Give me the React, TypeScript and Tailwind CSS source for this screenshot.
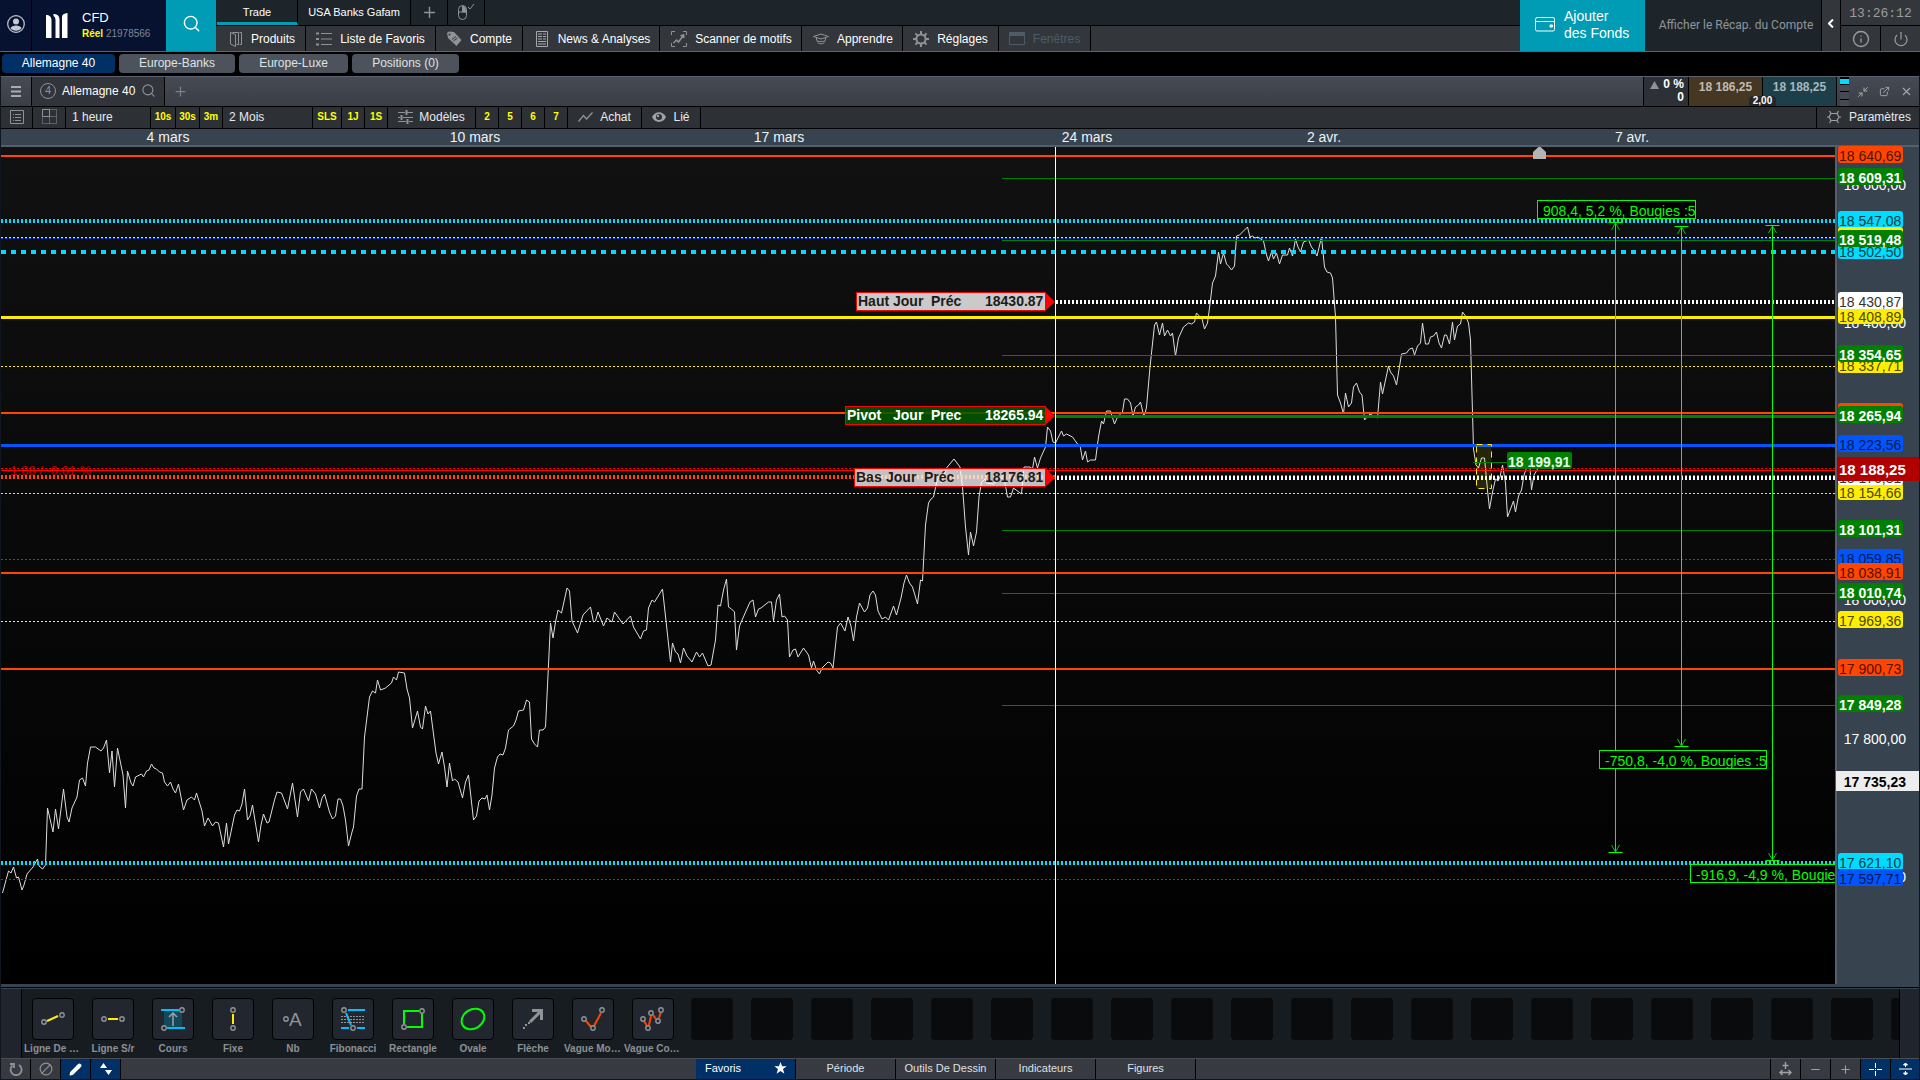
import React, { useState } from "react";
import { Search, Plus, Info, Power, X, ExternalLink, Minimize2, Ban, Pencil, Minus } from "lucide-react";

const GREEN = "#008000";
const ORANGE = "#ff4500";
const CYAN = "#00dcff";
const YELLOW = "#ffee00";
const BLUE = "#0055ff";

// horizontal levels: y, color, thickness, dash, start x
const levels = [
  { y: 156, color: ORANGE, w: 2 },
  { y: 178.5, color: GREEN, w: 1, x: 1002 },
  { y: 221, color: CYAN, w: 4, dash: "2 2" },
  { y: 238.5, color: BLUE, w: 1, dash: "2 2" },
  { y: 237.5, color: YELLOW, w: 1, dash: "2 2" },
  { y: 240.5, color: GREEN, w: 1, x: 1002 },
  { y: 252, color: CYAN, w: 4, dash: "5 5" },
  { y: 302, color: "#ffffff", w: 4, dash: "2 2", x: 1056 },
  { y: 317.5, color: YELLOW, w: 3 },
  { y: 355.5, color: GREEN, w: 1, x: 1002 },
  { y: 366.5, color: YELLOW, w: 1, dash: "2 2" },
  { y: 413, color: ORANGE, w: 2 },
  { y: 416.5, color: GREEN, w: 3, x: 1056 },
  { y: 445.5, color: BLUE, w: 3 },
  { y: 468.5, color: "#ff0000", w: 1, dash: "2 2" },
  { y: 470.5, color: "#ff0000", w: 1 },
  { y: 477, color: ORANGE, w: 4, dash: "2 2" },
  { y: 478, color: "#ffffff", w: 4, dash: "2 2", x: 1057 },
  { y: 493.5, color: YELLOW, w: 1, dash: "2 2" },
  { y: 530.5, color: GREEN, w: 1, x: 1002 },
  { y: 559.5, color: BLUE, w: 1, dash: "2 2" },
  { y: 573, color: ORANGE, w: 2 },
  { y: 593.5, color: GREEN, w: 1, x: 1002 },
  { y: 621.5, color: "#ffee60", w: 1, dash: "2 2" },
  { y: 669, color: ORANGE, w: 2 },
  { y: 705.5, color: GREEN, w: 1, x: 1002 },
  { y: 863, color: CYAN, w: 4, dash: "2 2" },
  { y: 879.5, color: BLUE, w: 1, dash: "2 2" },
];

const price =
  "2.5,893 8.5,871 11,873 13.5,867 16.5,878 18.5,877 22,890 24,885 27,874 33,867 37.5,859 39,866 42.5,869 45.5,865 47.5,808 53,832 55.5,809 58.5,829 63.5,789 67,817 69,822 72,808 77,797 79.5,780 82.5,778 85.5,786 87.5,763 90.5,747 95.5,747 101,751 103.5,748 106.5,740 109.5,773 112,751 114.5,787 117.5,748 123,775 125.5,808 127.5,771 131,783 133,786 135.5,777 141.5,774 143.5,777 146.5,771 149,770 151.5,764 154,768 156.5,769 159.5,772 162.5,773 164.5,782 167.5,786 170.5,782 173,789 175.5,793 178.5,784 183.5,810 187,800 191.5,797 194.5,800 196.5,793 202,811 204.5,826 208,818 212.5,826 215.5,822 218.5,823 223.5,847 226.5,823 228.5,844 234.5,815 237,810 239.5,811 242,804 244.5,789 247.5,820 250,816 252.5,805 258.5,842 261,825 263.5,814 267,823 269,822 274.5,800 277,792 281.5,793 287.5,809 292.5,783 297.5,817 300.5,792 303.5,789 308.5,801 311.5,789 315.5,794 319.5,808 322,798 324.5,794 329.5,812 332.5,819 335.5,816 338,799 340.5,799 343,806 345.5,820 348.5,846 352,832 353.5,827 356.5,796 359,789 362,789 364.5,737 369.5,697 372.5,691 375.5,693 377.5,680 380.5,690 385.5,688 391.5,683 393.5,677 396.5,680 398.5,672 404.5,673 407,689 409.5,698 412.5,728 417.5,711 420.5,727 422.5,729 425.5,706 428,714 430.5,711 436,753 438.5,764 442,752 444.5,767 447,787 449.5,763 452.5,781 454.5,779 458,782 462.5,798 465.5,782 468.5,775 473.5,820 476.5,816 479,801 482,798 485,799 487,795 489.5,810 492,795 494.5,768 497.5,757 500,754 503,755 505.5,748 508.5,730 513.5,726 516,720 518.5,711 523.5,710 526.5,700 529.5,702 531.5,739 534.5,744 537.5,747 539.5,730 543,730 545.5,727 550.5,623 553,638 555.5,622 558,610 561.5,613 567,588 569.5,591 572,621 577.5,633 583,615 590.5,607 593.5,622 595.5,621 598,612 603.5,626 607,618 612,622 614.5,612 623,624 630.5,616 633.5,627 640.5,639 643.5,631 646.5,630 648.5,608 652,600 654.5,602 662.5,589 670.5,662 672.5,643 675.5,652 678,654 680.5,663 683.5,648 687,656 692,662 696.5,652 699.5,657 702.5,653 708,666 711,665 715.5,640 718,605 720.5,606 723.5,590 726.5,579 728.5,607 731.5,609 734.5,612 736.5,650 739.5,626 742.5,619 750,602 753,600 755.5,617 758.5,609 761,608 768.5,602 771.5,602 773.5,621 776.5,600 779.5,594 782,617 784.5,616 787.5,620 789.5,657 793,650 795.5,649 798,657 803.5,648 808.5,655 811.5,668 813.5,661 816.5,670 819.5,674 822,668 828,662 830.5,663 833,668 837.5,627 840.5,623 845,631 848,617 851,626 853.5,641 856.5,617 859.5,603 864.5,612 867.5,608 870,595 873,591 875.5,595 878,611 882,619 885.5,617 888.5,620 893.5,606 896.5,615 901,598 904,583 906.5,575 909.5,583 912.5,587 917.5,604 920.5,580 922.5,581 925.5,525 928.5,503 931,499 933.5,497 936.5,483 939,475 941.5,483 946.5,468 954,459 960,467 962.5,487 965.5,527 968.5,555 970.5,532 973.5,546 976.5,532 979,497 981.5,482 985,479 986.5,483 993.5,484 1003.5,475 1007.5,497 1010.5,497 1013.5,488 1021.5,494 1024,467 1030,467 1032.5,469 1034.5,457 1037.5,468 1040.5,458 1045.5,447 1047.5,427 1050.5,431 1053,442 1055.5,443 1058.5,437 1061.5,431 1063.5,436 1066.5,434 1072.5,437 1077.5,444 1080,445 1082.5,460 1085.5,451 1087.5,462 1090.5,460 1095.5,460 1098.5,437 1101.5,421 1103.5,424 1106.5,411 1110.5,411 1114.5,424 1117.5,417 1122.5,412 1124.5,399 1127.5,399 1130.5,403 1133,416 1135.5,407 1138.5,405 1140.5,402 1143.5,415 1145,414 1146.5,407 1150,367 1154.5,325 1156.5,322 1159.5,335 1162.5,323 1164.5,336 1167.5,330 1170.5,336 1172.5,333 1175.5,356 1178.5,338 1183.5,327 1188.5,323 1191.5,324 1194.5,322 1196.5,313 1202,319 1204.5,329 1207.5,323 1210.5,300 1212.5,283 1215.5,276 1218.5,252 1220.5,264 1223.5,253 1226.5,264 1228.5,266 1231.5,270 1234.5,266 1236.5,236 1239.5,235 1247.5,227 1250,237 1252.5,236 1255,238 1258,237 1263.5,241 1266.5,255 1268.5,261 1271.5,252 1273.5,259 1276.5,253 1279.5,264 1282.5,255 1287.5,255 1289.5,248 1292.5,256 1295.5,239 1298,247 1300.5,252 1303.5,242 1308.5,240 1311.5,247 1314.5,251 1317,256 1321.5,237 1324.5,267 1327,272 1330.5,273 1332.5,278 1335.5,317 1337.5,395 1340.5,403 1343.5,414 1345.5,393 1348.5,407 1351.5,403 1353.5,387 1356.5,383 1359.5,392 1362,395 1364.5,420 1370,414 1377.5,418 1380.5,382 1382.5,394 1388.5,366 1390.5,372 1393.5,376 1396.5,385 1401.5,354 1406.5,353 1409.5,349 1412.5,348 1414.5,355 1417.5,346 1420.5,343 1422.5,323 1425.5,344 1428.5,344 1430.5,337 1433.5,336 1436.5,332 1439,343 1441.5,348 1444.5,335 1446.5,335 1449.5,344 1452.5,322 1454.5,340 1457.5,326 1460.5,324 1462.5,312 1465.5,316 1468.5,323 1470.5,340 1472.5,413 1473.5,449 1476,465 1478.5,468 1481.5,458 1484.5,458 1487.5,490 1489.5,509 1492.5,492 1495.5,479 1498,481 1500,477 1502.5,465 1505.5,483 1507.5,517 1513.5,501 1515.5,512 1518.5,496 1521.5,490 1524,475 1526.5,468 1530,468 1531.5,490 1534,475 1537.5,469";

const measures = [
  { x: 1615.5, top: 222, bottom: 852 },
  { x: 1681.5, top: 226, bottom: 746 },
  { x: 1772.5, top: 225, bottom: 860 },
];

const measureBoxes = [
  { x: 1537, y: 200, w: 158, text: "908,4, 5,2 %, Bougies :5" },
  { x: 1599, y: 750, w: 167, text: "-750,8, -4,0 %, Bougies :5" },
  { x: 1690, y: 864, w: 167, text: "-916,9, -4,9 %, Bougies :5" },
];

const dayLabels = [
  { y: 292, x: 856, words: [["Haut", 858], ["Jour", 893], ["Préc", 931], ["18430.87", 985]], fill: "#ffffff", opacity: 0.78, ink: "#1c1c1c" },
  { y: 406, x: 845, words: [["Pivot", 847], ["Jour", 893], ["Prec", 931], ["18265.94", 985]], fill: "#005a00", opacity: 0.85, ink: "#ffffff" },
  { y: 468, x: 854, words: [["Bas", 856], ["Jour", 886], ["Préc", 924], ["18176.81", 985]], fill: "#ffffff", opacity: 0.75, ink: "#1c1c1c" },
];

// price scale, painted in this order
const ticks = [
  { top: 177, text: "18 600,00" },
  { top: 315, text: "18 400,00" },
  { top: 592, text: "18 000,00" },
  { top: 731, text: "17 800,00" },
  { top: 869, text: "17 600,00" },
];

const tags = [
  { top: 146, text: "18 640,69", cls: "bg-[#ff4500] text-[#4d1500]" },
  { top: 168, text: "18 609,31", cls: "bg-[#008000] text-white font-bold" },
  { top: 211, text: "18 547,08", cls: "bg-[#00dcff] text-[#003a45]" },
  { top: 227, text: "", cls: "bg-[#ffee00]" },
  { top: 242, text: "18 502,50", cls: "bg-[#00dcff] text-[#004450]" },
  { top: 230, text: "18 519,48", cls: "bg-[#008000] text-white font-bold" },
  { top: 307, text: "18 408,89", cls: "bg-[#ffee00] text-[#4d4700]" },
  { top: 292, text: "18 430,87", cls: "bg-white text-[#333333]" },
  { top: 356, text: "18 337,71", cls: "bg-[#ffee00] text-[#4d4700]" },
  { top: 345, text: "18 354,65", cls: "bg-[#008000] text-white font-bold" },
  { top: 403, text: "", cls: "bg-[#ff4500]" },
  { top: 406, text: "18 265,94", cls: "bg-[#008000] text-white font-bold" },
  { top: 435, text: "18 223,56", cls: "bg-[#0055ff] text-[#001a4d]" },
  { top: 483, text: "18 154,66", cls: "bg-[#ffee00] text-[#4d4700]" },
  { top: 468, text: "18 176,81", cls: "bg-white text-[#333333]" },
  { top: 520, text: "18 101,31", cls: "bg-[#008000] text-white font-bold" },
  { top: 549, text: "18 059,85", cls: "bg-[#0055ff] text-[#001a4d]" },
  { top: 563, text: "18 038,91", cls: "bg-[#ff4500] text-[#4d1500]" },
  { top: 583, text: "18 010,74", cls: "bg-[#008000] text-white font-bold" },
  { top: 611, text: "17 969,36", cls: "bg-[#ffee00] text-[#4d4700]" },
  { top: 659, text: "17 900,73", cls: "bg-[#ff4500] text-[#4d1500]" },
  { top: 695, text: "17 849,28", cls: "bg-[#008000] text-white font-bold" },
  { top: 853, text: "17 621,10", cls: "bg-[#00dcff] text-[#003a45]" },
  { top: 869, text: "17 597,71", cls: "bg-[#0055ff] text-[#001a4d]" },
];

const dates = [
  { x: 167, text: "4 mars" },
  { x: 474, text: "10 mars" },
  { x: 778, text: "17 mars" },
  { x: 1086, text: "24 mars" },
  { x: 1323, text: "2 avr." },
  { x: 1631, text: "7 avr." },
];

function BookIcon() {
  return (
    <svg width="14" height="16" viewBox="0 0 14 16" fill="none" stroke="#8f9296">
      <path d="M1.5 1.5l5 2v12l-5-2.5z" />
      <path d="M3.5 1.5h6v12h-2M10.5 1.5h2v12h-2" />
    </svg>
  );
}

function ListIcon() {
  return (
    <svg width="16" height="14" viewBox="0 0 16 14" stroke="#8f9296">
      <path d="M0 1.5h3M0 7h3M0 12.5h3" strokeWidth="2" />
      <path d="M5 1.5h11M5 7h11M5 12.5h11" />
    </svg>
  );
}

function TagIcon() {
  return (
    <svg width="16" height="16" viewBox="0 0 16 16">
      <path d="M1 2l2-1.500 5 .5 7.500 8-5 6L2 7z" fill="#8f9296" />
      <circle cx="3.500" cy="3.500" r="1" fill="#34373c" />
      <path d="M6 8.500l4-3M7.500 10l4-3" stroke="#34373c" />
    </svg>
  );
}

function NewsIcon() {
  return (
    <svg width="12" height="16" viewBox="0 0 12 16" fill="none" stroke="#a5a7aa">
      <path d="M.5.5h11v15H.5z" />
      <path d="M2 3h4M7 3h3M2 5.500h4M7 5.500h3M2 8h4M7 8h3M2 10.500h8M2 13h8" />
    </svg>
  );
}

function ScannerIcon() {
  return (
    <svg width="16" height="16" viewBox="0 0 16 16" fill="none" stroke="#8f9296">
      <path d="M.5 4V.5H4M12 .5h3.500V4M15.500 12v3.500H12M4 15.500H.500V12" />
      <path d="M2.500 12l3-3 2 2 4.500-6" strokeWidth="1.500" />
      <path d="M9.500 4.500l3.500-1v3.500z" fill="#8f9296" />
    </svg>
  );
}

function HatIcon() {
  return (
    <svg width="16" height="12" viewBox="0 0 16 12" fill="none" stroke="#8f9296">
      <path d="M.5 3.500L8 1l7.500 2.500L8 6z" />
      <path d="M3.500 5v2c0 2 9 2 9 0V5M4.500 8.500c0 3 7 3 7 0" />
    </svg>
  );
}

function GearIcon() {
  return (
    <svg width="16" height="16" viewBox="0 0 16 16" fill="none" stroke="#8f9296" strokeWidth="2">
      <circle cx="8" cy="8" r="4.600" />
      <path d="M8 0v3M8 13v3M0 8h3M13 8h3M2.400 2.400l2 2M11.600 11.600l2 2M13.600 2.400l-2 2M4.400 11.600l-2 2" />
    </svg>
  );
}

function WindowIcon() {
  return (
    <svg width="16" height="13" viewBox="0 0 16 13" fill="none" stroke="#4c5d69">
      <path d="M.5.5h15v12H.5z" />
      <path d="M1 2.500h14" strokeWidth="3" />
    </svg>
  );
}

function WalletIcon() {
  return (
    <svg width="20" height="15" viewBox="0 0 20 15" fill="none" stroke="#ffffff">
      <path d="M.5 2.500v10a1.500 1.500 0 0 0 1.500 1.500h16a1.500 1.500 0 0 0 1.500-1.500V4.500H.5M.5 2.500a2 2 0 0 1 2-2H18a1.500 1.500 0 0 1 1.500 1.500v3" />
      <path d="M15 8h2.500v2H15z" fill="#ffffff" />
    </svg>
  );
}

function MouseIcon() {
  return (
    <svg width="18" height="17" viewBox="0 0 18 17" fill="none" stroke="#8f9296">
      <path d="M1.500 5.500a4 4 0 0 1 8 0v6a4 4 0 0 1-8 0zM5.500 2v6M1.500 8h8" />
      <path d="M6 2.500c2 0 3 2 3 5.500H6z" fill="#8f9296" />
      <path d="M11 3l2 2 4-5" />
    </svg>
  );
}

function SlidersIcon() {
  return (
    <svg width="15" height="14" viewBox="0 0 15 14" fill="none" stroke="#8f9296">
      <path d="M0 2.500h7M9 2.500h6M0 7.500h2M5 7.500h10M0 11.500h8M11 11.500h4" />
      <path d="M8.500 0v5M3.500 5v5M9.500 9v5" strokeWidth="2" />
    </svg>
  );
}

const navItems = [
  { label: "Produits", icon: <BookIcon />, cls: "w-[89px] gap-2 pl-0.5" },
  { label: "Liste de Favoris", icon: <ListIcon />, cls: "w-[130px] gap-2" },
  { label: "Compte", icon: <TagIcon />, cls: "w-[87px] gap-2" },
  { label: "News & Analyses", icon: <NewsIcon />, cls: "w-[137px] gap-2.5 pl-1" },
  { label: "Scanner de motifs", icon: <ScannerIcon />, cls: "w-[142px] gap-2 pl-0.5" },
  { label: "Apprendre", icon: <HatIcon />, cls: "w-[101px] gap-2 pl-0.5" },
  { label: "Réglages", icon: <GearIcon />, cls: "w-[96px] gap-2" },
  { label: "Fenêtres", icon: <WindowIcon />, cls: "w-[92px] gap-2 text-[#4c5d69]" },
];

function Header() {
  return (
    <header className="flex h-[52px] shrink-0 border-b border-[#1f7f8d] bg-[#1d252b]">
      <button aria-label="Profil" className="flex w-8 items-center justify-center border-r border-black bg-[#06122f] pb-1 text-[#c5cad2]">
        <svg width="18" height="18" viewBox="0 0 18 18">
          <circle cx="9" cy="9" r="8.300" fill="none" stroke="currentColor" strokeWidth="1.200" />
          <circle cx="9" cy="6.500" r="3" fill="currentColor" />
          <path d="M3.500 13c1-3.500 10-3.500 11 0-2 3.600-9 3.600-11 0z" fill="currentColor" />
        </svg>
      </button>
      <div className="flex w-[134px] items-center gap-3.5 bg-[#06122f] pl-3.5">
        <svg width="22" height="26" viewBox="0 0 22 26" fill="#ffffff">
          <path d="M0 2c3.500 0 5.500 2 5.500 5v18H0zM7.500 1c4 0 6 2 6 6v18h-4V9c0-3 0-5-2-6zM16 4c0-2.500 2-3.500 5.500-4v25H16z" />
        </svg>
        <div>
          <div className="text-[13px] leading-4 text-white">CFD</div>
          <div className="text-[10px] leading-4 text-[#7f8794]">
            <b className="text-[#ffff00]">Réel</b> 21978566
          </div>
        </div>
      </div>
      <button aria-label="Rechercher" className="flex w-[50px] items-center justify-center bg-[#009bb4] pb-1 text-white">
        <Search size={19} strokeWidth={1.8} />
      </button>
      <div className="flex min-w-0 flex-1 flex-col">
        <div className="flex h-[26px] border-b border-black pl-px text-[11px] text-white">
          <button className="w-[81px] border-r border-b-[3px] border-r-black border-b-[#009bb4] pt-0.5">Trade</button>
          <button className="w-[113px] border-r border-black">USA Banks Gafam</button>
          <button aria-label="Ajouter" className="flex w-[37px] items-center justify-center border-r border-black text-[#8f9296]">
            <Plus size={17} strokeWidth={2} />
          </button>
          <button aria-label="Souris" className="flex w-[37px] items-center justify-center border-r border-black">
            <MouseIcon />
          </button>
        </div>
        <nav className="flex flex-1 bg-[#33363b] pl-px text-xs text-white">
          {navItems.map((n) => (
            <button key={n.label} className={`flex shrink-0 items-center justify-center border-r border-black ${n.cls}`}>
              {n.icon}
              {n.label}
            </button>
          ))}
        </nav>
      </div>
      <button className="flex w-[125px] items-center gap-[9px] bg-[#009bb4] pb-0.5 pl-[15px] text-left text-sm leading-[17px] text-white">
        <WalletIcon />
        <span>
          Ajouter
          <br />
          des Fonds
        </span>
      </button>
      <button className="w-[177px] border-r border-black pb-0.5 pl-1.5 font-[Roboto,sans-serif] text-xs text-[#8f969a]">
        Afficher le Récap. du Compte
      </button>
      <button aria-label="Replier" className="flex w-[19px] items-center justify-center border-r border-black bg-[#33363b] pb-1">
        <svg width="6" height="9" viewBox="0 0 6 9" fill="none" stroke="#ffffff" strokeWidth="2">
          <path d="M5 .5l-4 4 4 4" />
        </svg>
      </button>
      <div className="flex w-[79px] flex-col bg-[#33363b] text-[#9a9da0]">
        <div className="h-[26px] border-b border-black text-center font-['Liberation_Mono',monospace] text-[13px] leading-7">13:26:12</div>
        <div className="flex flex-1">
          <button aria-label="Informations" className="flex w-10 items-center justify-center border-r border-black">
            <Info size={18} strokeWidth={1.8} />
          </button>
          <button aria-label="Quitter" className="flex flex-1 items-center justify-center">
            <Power size={16} strokeWidth={1.8} />
          </button>
        </div>
      </div>
    </header>
  );
}

function WorkspaceTabs() {
  const [active, setActive] = useState("Allemagne 40");
  const tabs = [
    { label: "Allemagne 40", cls: "w-[113px]" },
    { label: "Europe-Banks", cls: "w-[116px]" },
    { label: "Europe-Luxe", cls: "w-[109px]" },
    { label: "Positions (0)", cls: "w-[107px]" },
  ];
  return (
    <div className="flex h-6 shrink-0 items-center gap-1 bg-black pb-px pl-0.5 text-xs">
      {tabs.map((t) => (
        <button
          key={t.label}
          onClick={() => setActive(t.label)}
          className={`h-[19px] rounded-sm pb-0.5 ${t.cls} ${active === t.label ? "bg-[#003066] text-white" : "bg-[#4c535c] text-[#dfe3e6]"}`}
        >
          {t.label}
        </button>
      ))}
    </div>
  );
}

function WindowHeader() {
  return (
    <div className="flex h-[31px] shrink-0 border-t border-b border-t-[#5c626e] border-b-black bg-linear-to-b from-[#464a54] to-[#3a3e46]">
      <button aria-label="Menu" className="flex w-[31px] items-center justify-center border-r border-black text-[#a9abae]">
        <svg width="10" height="11" viewBox="0 0 10 11" stroke="currentColor" strokeWidth="2">
          <path d="M0 1h10M0 5.500h10M0 10h10" />
        </svg>
      </button>
      <div className="flex w-[133px] items-center gap-1.5 border-r border-black bg-[#31343a] pb-0.5 pl-2 text-xs text-white">
        <span className="flex size-4 items-center justify-center rounded-full border border-[#8f9296] text-[11px] text-[#8f9296]">4</span>
        Allemagne 40
        <Search size={15} strokeWidth={1.8} className="text-[#8f9296]" />
      </div>
      <button aria-label="Nouvel onglet" className="flex w-[30px] items-center justify-center text-[#7c7f86]">
        <Plus size={15} strokeWidth={2} />
      </button>
      <div className="flex-1" />
      <div className="w-[46px] border-r border-l border-black bg-[#2d3036] pt-px pr-1 text-right text-xs leading-[13px] font-bold text-white">
        <div className="flex items-center justify-end gap-1">
          <svg width="9" height="8" viewBox="0 0 9 8" fill="#8f9296">
            <path d="M4.500 0L9 8H0z" />
          </svg>
          0 %
        </div>
        <div>0</div>
      </div>
      <div className="relative flex text-xs font-bold text-[#bfbcb4]">
        <button className="w-[74px] border-r border-black bg-[#463722] pb-2.5">18 186,25</button>
        <button className="w-[74px] border-r border-black bg-[#1c3f49] pb-2.5 text-[#a9b8bc]">18 188,25</button>
        <span className="absolute bottom-0 left-[60px] h-[10px] w-[27px] rounded-t-sm bg-[#23262c] text-center text-[10px] leading-[10px] text-white">2,00</span>
      </div>
      <div className="flex w-[82px] items-center pl-[3px] text-[#a5a8ad]">
        <div className="flex w-[9px] flex-col gap-px self-stretch bg-black pt-0.5">
          <i className="h-[5px] bg-[#00dcff]" />
          <i className="flex-1 bg-[#464a54]" />
          <i className="flex-1 bg-[#464a54]" />
          <i className="flex-1 bg-[#464a54]" />
        </div>
        <div className="flex flex-1 items-center justify-between pr-1.5 pl-2">
          <button aria-label="Réduire">
            <Minimize2 size={12} strokeWidth={2} />
          </button>
          <button aria-label="Détacher">
            <ExternalLink size={11} strokeWidth={2} />
          </button>
          <button aria-label="Fermer">
            <X size={13} strokeWidth={2} />
          </button>
        </div>
      </div>
    </div>
  );
}

const cell = "flex items-center border-r border-black shrink-0 h-full pb-0.5";
const quick = "justify-center text-[10px] font-bold text-[#ffff00]";

function ChartToolbar() {
  return (
    <div className="flex h-[22px] shrink-0 border-b border-black bg-[#2d3135] text-xs text-[#e8eaec]">
      <button aria-label="Liste" className={`${cell} w-8 justify-center`}>
        <svg width="14" height="14" viewBox="0 0 14 14" fill="none" stroke="#8f9296">
          <path d="M.5.5h13v13H.5zM3 4.500h1M3 7.500h1M3 10.500h1M5 4.500h6M5 7.500h6M5 10.500h6" />
        </svg>
      </button>
      <button aria-label="Disposition" className={`${cell} w-[33px] justify-center`}>
        <svg width="15" height="15" viewBox="0 0 15 15" fill="none" stroke="#8f9296">
          <path d="M.5.5h7v7h-7z" />
          <path d="M7.500.5h7v14H.5v-7M7.500 7.500h7M7.500 7.500v7" strokeDasharray="1 1" />
        </svg>
      </button>
      <button className={`${cell} w-[85px] pl-1.5`}>1 heure</button>
      <button className={`${cell} w-[25px] ${quick}`}>10s</button>
      <button className={`${cell} w-6 ${quick}`}>30s</button>
      <button className={`${cell} w-[23px] ${quick}`}>3m</button>
      <button className={`${cell} w-[90px] pl-1.5`}>2 Mois</button>
      <button className={`${cell} w-[29px] ${quick}`}>SLS</button>
      <button className={`${cell} w-[23px] ${quick}`}>1J</button>
      <button className={`${cell} w-[23px] ${quick}`}>1S</button>
      <button className={`${cell} w-[88px] justify-center gap-1.5`}>
        <SlidersIcon />
        Modèles
      </button>
      <button className={`${cell} w-[23px] ${quick}`}>2</button>
      <button className={`${cell} w-[23px] ${quick}`}>5</button>
      <button className={`${cell} w-[23px] ${quick}`}>6</button>
      <button className={`${cell} w-[23px] ${quick}`}>7</button>
      <button className={`${cell} w-[74px] justify-center gap-[7px]`}>
        <svg width="15" height="10" viewBox="0 0 15 10" fill="none" stroke="#8f9296" strokeWidth="1.300">
          <path d="M.5 9.500l5-6 3 3.500 6-6.500" />
        </svg>
        Achat
      </button>
      <button className={`${cell} w-[59px] justify-center gap-[7px]`}>
        <svg width="14" height="10" viewBox="0 0 14 10">
          <path d="M0 5c3-6.500 11-6.500 14 0-3 6.500-11 6.500-14 0z" fill="#a0a2a5" />
          <circle cx="7" cy="5" r="3" fill="#2d3135" />
          <circle cx="6" cy="4" r="1.200" fill="#a0a2a5" />
        </svg>
        Lié
      </button>
      <div className="flex-1" />
      <button className="flex w-[103px] items-center justify-end gap-2 border-l border-black pr-2 pb-0.5">
        <svg width="14" height="14" viewBox="0 0 14 14" fill="none" stroke="#a0a2a5" strokeWidth="1.200">
          <path d="M4 3.500h6l2 3.500-2 3.500H4L2 7zM4 3.500L2.500 1M10 3.500L11.500 1M12 7h2M2 7H0M4 10.500L2.500 13M10 10.500l1.500 2.500" />
        </svg>
        Paramètres
      </button>
    </div>
  );
}

function Plot() {
  return (
    <svg className="block h-full w-full" fontFamily="'Liberation Sans', Arial, sans-serif" fontSize="14">
      <defs>
        <linearGradient id="plotBg" x1="0" y1="0" x2="0" y2="1">
          <stop offset="0" stopColor="#111111" />
          <stop offset="1" stopColor="#000000" />
        </linearGradient>
      </defs>
      <rect width="100%" height="100%" fill="url(#plotBg)" />
      <g transform="translate(-1 -147)">
        <text x="6" y="475" fontSize="13" fill="#c00000">-1.88 / -0.01 %</text>
        <polyline points={price} fill="none" stroke="#dddddd" strokeWidth="1" strokeLinejoin="round" />
        {levels.map((l) => (
          <line key={l.y} x1={l.x || 1} x2="101%" y1={l.y} y2={l.y} stroke={l.color} strokeWidth={l.w} strokeDasharray={l.dash} />
        ))}
        <rect x="1476.500" y="444.500" width="15" height="44" fill="#ffee00" fillOpacity="0.120" stroke="#ffee00" strokeDasharray="6 5" />
        <path d="M1473 462.500h34" stroke={GREEN} />
        <rect x="1507" y="452" width="65" height="17" rx="2" fill={GREEN} />
        <text x="1508" y="467" fontWeight="bold" fill="#e8ffe8">18 199,91</text>

        {dayLabels.map((d) => (
          <g key={d.y}>
            <rect x={d.x + 0.5} y={d.y + 0.5} width={1045 - d.x} height="18" fill={d.fill} fillOpacity={d.opacity} stroke="#ff0000" />
            <path d={`M1045 ${d.y}l10 10-10 9z`} fill="#ff0000" />
            {d.words.map((w) => (
              <text key={w[0]} x={w[1]} y={d.y + 14} fontWeight="bold" fill={d.ink}>{w[0]}</text>
            ))}
          </g>
        ))}
        <path d="M1055.500 147V2000" stroke="#ffffff" />

        {measures.map((m) => (
          <g key={m.x} stroke="#00ff00">
            <path d={`M${m.x} ${m.top}V${m.bottom}M${m.x - 7} ${m.top + 0.5}h14M${m.x - 7} ${m.bottom + 0.5}h14`} />
            <path d={`M${m.x - 4} ${m.top + 8}l4-7 4 7M${m.x - 4} ${m.bottom - 7}l4 7 4-7`} fill="none" stroke="#00c800" />
          </g>
        ))}
        {measureBoxes.map((b) => (
          <g key={b.y}>
            <rect x={b.x + 0.5} y={b.y + 0.5} width={b.w} height="18" fill="#000000" stroke="#00ff00" />
            <text x={b.x + 6} y={b.y + 16} fill="#00ff00">{b.text}</text>
          </g>
        ))}
        <path d="M1533 159v-7l6.500-6 6.500 6v7z" fill="#b4b4b4" />
      </g>
    </svg>
  );
}

function PriceScale() {
  return (
    <div className="relative w-[84px] shrink-0 border-l-2 border-[#565e6e] bg-[#37434e] text-sm">
      {ticks.map((t) => (
        <span key={t.text} className="absolute right-[13px] leading-4 text-white" style={{ top: t.top - 147 }}>
          {t.text}
        </span>
      ))}
      {tags.map((t) => (
        <span key={t.top} className={`absolute left-px h-[17px] w-[65px] rounded-[3px] pl-px leading-5 whitespace-nowrap ${t.cls}`} style={{ top: t.top - 147 }}>
          {t.text}
        </span>
      ))}
      <span className="absolute right-0 left-0 h-6 bg-[#b00000] pl-0.5 text-[15px] leading-[26px] font-bold text-white" style={{ top: 310 }}>
        18 188,25
      </span>
      <span className="absolute right-0 -left-px h-5 bg-[#ededed] pr-[13px] text-right leading-[22px] font-bold text-black" style={{ top: 624 }}>
        17 735,23
      </span>
    </div>
  );
}

function Dot({ x, y }: { x: number; y: number }) {
  return <circle cx={x} cy={y} r="2.200" fill="none" stroke="#8f9296" strokeWidth="1.400" />;
}

const tools = [
  {
    label: "Ligne De Tendance",
    icon: (
      <>
        <path d="M15 23l11-5" stroke={YELLOW} strokeWidth="2" />
        <Dot x={12} y={24} />
        <Dot x={30} y={17} />
      </>
    ),
  },
  {
    label: "Ligne S/r",
    icon: (
      <>
        <path d="M16 21h10" stroke={YELLOW} strokeWidth="2" />
        <Dot x={12} y={21} />
        <Dot x={30} y={21} />
      </>
    ),
  },
  {
    label: "Cours",
    icon: (
      <>
        <path d="M12 13h18v16H12z" fill="#124a5c" />
        <path d="M9 12h18M15 30h18" stroke="#00bfff" strokeWidth="2" />
        <path d="M21 28V15M17 19l4-4 4 4" stroke="#a0a2a5" strokeWidth="1.500" fill="none" />
        <Dot x={30} y={12} />
        <Dot x={12} y={30} />
      </>
    ),
  },
  {
    label: "Fixe",
    icon: (
      <>
        <path d="M21 16v10" stroke={YELLOW} strokeWidth="2" />
        <Dot x={21} y={12} />
        <Dot x={21} y={30} />
      </>
    ),
  },
  {
    label: "Nb",
    icon: (
      <>
        <Dot x={14} y={21} />
        <text x="17" y="28" fontSize="19" fill="#8f9296" fontFamily="'Liberation Sans', Arial, sans-serif">A</text>
      </>
    ),
  },
  {
    label: "Fibonacci",
    icon: (
      <>
        <path d="M16 12h17M9 30h8M25 30h8M14 15l5 12" stroke="#00bfff" strokeWidth="2" />
        <path d="M9 18.500h24M9 21.500h24M9 24.500h24" stroke="#8f9296" strokeDasharray="2 1" />
        <Dot x={12} y={12} />
        <Dot x={21} y={30} />
      </>
    ),
  },
  {
    label: "Rectangle",
    icon: (
      <>
        <path d="M12 26V13h15M30 16v13H15" stroke="#00ff00" strokeWidth="2" fill="none" />
        <Dot x={30} y={13} />
        <Dot x={12} y={29} />
      </>
    ),
  },
  {
    label: "Ovale",
    icon: <ellipse cx="21" cy="21" rx="12" ry="9.500" transform="rotate(-32 21 21)" fill="none" stroke="#00ff00" strokeWidth="2" />,
  },
  {
    label: "Flèche",
    icon: (
      <>
        <path d="M18 24l10-10M20 12.500h9.500V22" stroke="#8f9296" strokeWidth="3" fill="none" />
        <path d="M11 30h2M13 27h2M16 25h2" stroke="#8f9296" strokeWidth="2" />
      </>
    ),
  },
  {
    label: "Vague Motrice",
    icon: (
      <>
        <path d="M14 23l5 6M22 28l7-13" stroke={ORANGE} strokeWidth="2" />
        <Dot x={12} y={21} />
        <Dot x={21} y={30} />
        <Dot x={30} y={12} />
      </>
    ),
  },
  {
    label: "Vague Corrective",
    icon: (
      <>
        <path d="M12 23l3 5M17 27l2-9M21 17l3 4M27 20l2-6" stroke={ORANGE} strokeWidth="2" />
        <Dot x={11} y={21} />
        <Dot x={16} y={30} />
        <Dot x={19} y={15} />
        <Dot x={26} y={23} />
        <Dot x={29} y={12} />
      </>
    ),
  },
];

function Toolbox() {
  return (
    <div className="flex h-[70px] shrink-0 border-t border-[#37434e] bg-[#171c20]">
      <div className="w-[21px] shrink-0 border-r border-black bg-[#20242c]" />
      <div className="flex min-w-0 flex-1 overflow-hidden pt-[9px] pl-px">
        {tools.map((t) => (
          <button key={t.label} className="flex w-15 shrink-0 flex-col items-center">
            <span className="size-[42px] rounded border border-black bg-[#22262f]">
              <svg width="42" height="42" viewBox="1 1 42 42">{t.icon}</svg>
            </span>
            <span className="mt-0.5 w-[58px] truncate text-center text-[10px] leading-[14px] font-bold text-[#8b9096]">{t.label}</span>
          </button>
        ))}
        {Array.from({ length: 21 }, (_, i) => (
          <div key={i} className="w-15 shrink-0 px-2">
            <div className="size-[42px] rounded bg-[#090b0d]" />
          </div>
        ))}
      </div>
      <div className="w-5 shrink-0 border-l border-black bg-[#20242c]" />
    </div>
  );
}

function BottomBar() {
  const [tab, setTab] = useState("Favoris");
  const small = "flex w-[30px] items-center justify-center border-r border-black";
  return (
    <div className="flex h-[21px] shrink-0 border-t border-[#4a4e54] bg-[#373a41] text-[11px] text-[#dfe1e3]">
      <button aria-label="Annuler" className={`${small} text-[#8f9296]`}>
        <svg width="14" height="14" viewBox="0 0 14 14" fill="none" stroke="currentColor" strokeWidth="1.800">
          <path d="M10 3a5.500 5.500 0 1 1-6.500.5M1 2h4v4" />
        </svg>
      </button>
      <button aria-label="Effacer" className={`${small} text-[#8f9296]`}>
        <Ban size={14} className="-scale-x-100" />
      </button>
      <button aria-label="Dessiner" className={`${small} bg-[#003066] text-white`}>
        <Pencil size={13} fill="currentColor" />
      </button>
      <button aria-label="Ordre" className={`${small} bg-[#003066] text-white`}>
        <svg width="12" height="12" viewBox="0 0 12 12" fill="currentColor">
          <path d="M0 5l3.500-5L7 5zM5 7h7l-3.500 5z" />
        </svg>
      </button>
      <div className="flex-1" />
      {["Favoris", "Période", "Outils De Dessin", "Indicateurs", "Figures"].map((t) => (
        <button
          key={t}
          onClick={() => setTab(t)}
          className={`flex w-[100px] items-center border-r border-black pb-0.5 ${tab === t ? "justify-between bg-[#003066] pr-2 pl-[9px] text-white" : "justify-center"}`}
        >
          {t}
          {tab === t && (
            <svg width="13" height="12" viewBox="0 0 13 12" fill="#ffffff">
              <path d="M6.500 0l1.600 4.300h4.600L9 7l1.400 4.700-3.900-2.800-3.900 2.800L4 7 .3 4.300h4.600z" />
            </svg>
          )}
        </button>
      ))}
      <div className="w-[575px] border-r border-black" />
      <button aria-label="Ajuster" className={`${small} text-[#a0a2a5]`}>
        <svg width="13" height="14" viewBox="0 0 13 14" fill="none" stroke="currentColor" strokeWidth="1.400">
          <path d="M6.500 0v7M3.500 3.500h6M1 10.500h11M3.500 8L1 10.500 3.500 13M9.500 8l2.500 2.500L9.500 13" />
        </svg>
      </button>
      <button aria-label="Zoom arrière" className={`${small} text-[#a0a2a5]`}>
        <Minus size={13} />
      </button>
      <button aria-label="Zoom avant" className={`${small} text-[#a0a2a5]`}>
        <Plus size={13} />
      </button>
      <button aria-label="Réticule" className={`${small} bg-[#003066]`}>
        <svg width="13" height="13" viewBox="0 0 13 13" stroke="#ffffff">
          <path d="M6.500 0v5M6.500 8v5M0 6.500h5M8 6.500h5M6 6.500h1" />
        </svg>
      </button>
      <button aria-label="Échelle" className="flex w-7 items-center justify-center bg-[#003066]">
        <svg width="13" height="14" viewBox="0 0 13 14" fill="#ffffff" stroke="#ffffff">
          <path d="M0 7h13M6.500 1v4M6.500 9v4" />
          <path d="M4.500 3l2-2 2 2zM4.500 11l2 2 2-2z" />
        </svg>
      </button>
    </div>
  );
}

export default function App() {
  return (
    <div className="flex h-screen flex-col overflow-hidden bg-black font-['Liberation_Sans',Arial,sans-serif]">
      <Header />
      <WorkspaceTabs />
      <main className="flex min-h-0 flex-1 flex-col border-x border-b border-[#10161d]">
        <WindowHeader />
        <ChartToolbar />
        <div className="relative h-[18px] shrink-0 border-b-2 border-[#565e6e] bg-[#37434e] text-sm leading-4 text-[#f0f2f4]">
          {dates.map((d) => (
            <span key={d.text} className="absolute -translate-x-1/2 whitespace-nowrap" style={{ left: d.x }}>
              {d.text}
            </span>
          ))}
        </div>
        <div className="flex min-h-0 flex-1">
          <div className="min-w-0 flex-1">
            <Plot />
          </div>
          <PriceScale />
        </div>
        <div className="h-1 shrink-0 border-b border-black bg-[#37434e]" />
        <Toolbox />
        <BottomBar />
      </main>
    </div>
  );
}
